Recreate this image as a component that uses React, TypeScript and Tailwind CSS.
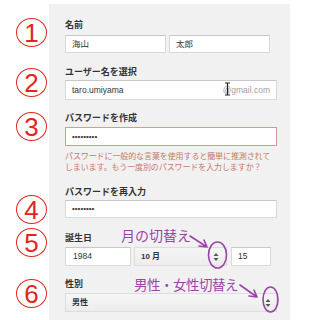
const jp = { fontFamily: '"Liberation Sans", "Noto Sans CJK JP", sans-serif' };

function Num({ ch, top }: { ch: string; top: string }) {
  return (
    <div className="w-[49px] shrink-0 bg-white pl-[16px]">
      <div
        className={`${top} w-[31px] h-[29px] rounded-[50%] border-[1.5px] border-[#e2261c] flex items-center justify-center text-[26px] leading-none text-[#e2261c]`}
        style={{ fontFamily: '"Liberation Sans", sans-serif' }}
      >
        {ch}
      </div>
    </div>
  );
}

function Arrows() {
  return (
    <svg width="6" height="10" viewBox="0 0 6 10" className="shrink-0">
      <path d="M3 1 L5.5 4 L0.5 4 Z" fill="#555" />
      <path d="M3 9 L5.5 6 L0.5 6 Z" fill="#555" />
    </svg>
  );
}

export default function App() {
  return (
    <div className="relative w-[297px] h-[320px] overflow-hidden bg-white text-[#333]" style={jp}>
      <div className="h-[4px]" />

      {/* 名前 */}
      <div className="flex">
        <Num ch="1" top="mt-[14px]" />
        <div className="w-[241px] bg-[#f1f1f1] pl-4 pt-[14px] pb-[9px]">
          <div className="text-[9px] font-bold leading-[14px] mb-[3px]">名前</div>
          <div className="flex gap-[3px]">
            <div className="w-[101px] h-[18px] bg-white border border-[#d9d9d9] border-t-[#c8c8c8] pl-[6px] text-[8.5px] leading-[16px]">海山</div>
            <div className="w-[101px] h-[18px] bg-white border border-[#d9d9d9] border-t-[#c8c8c8] pl-[6px] text-[8.5px] leading-[16px]">太郎</div>
          </div>
        </div>
        <div className="flex-1 bg-white" />
      </div>

      {/* ユーザー名 */}
      <div className="flex">
        <Num ch="2" top="mt-[6px]" />
        <div className="w-[241px] bg-[#f1f1f1] pl-4 pt-[3px] pb-[8px]">
          <div className="text-[9px] font-bold leading-[14px] mb-[1px]">ユーザー名を選択</div>
          <div className="relative w-[212px] h-[20px] bg-white border border-[#d9d9d9] border-t-[#c8c8c8] pl-[6px] pr-[6px] flex items-center justify-between text-[8.5px]">
            <span>taro.umiyama</span>
            <span className="text-[#a0a0a0]">@gmail.com</span>
            <svg width="7" height="14" viewBox="0 0 7 14" className="absolute left-[158px] top-[1px]">
              <path d="M1 1 H6 M3.5 1 V13 M1 13 H6" stroke="#222" strokeWidth="1.2" fill="none" />
            </svg>
          </div>
        </div>
        <div className="flex-1 bg-white" />
      </div>

      {/* パスワード */}
      <div className="flex">
        <Num ch="3" top="mt-[4px]" />
        <div className="w-[241px] bg-[#f1f1f1] pl-4 pt-[3px] pb-[7px]">
          <div className="text-[9px] font-bold leading-[14px] mb-[2px]">パスワードを作成</div>
          <div className="w-[212px] h-[19px] bg-white border border-[#d69b8e] pl-[6px] flex items-center text-[8px] leading-none">•••••••••</div>
          <div className="mt-[5px] text-[8px] leading-[11px] text-[#c7786a] tracking-[-0.1px]">
            パスワードに一般的な言葉を使用すると簡単に推測されて
            <br />
            しまいます。もう一度別のパスワードを入力しますか？
          </div>
        </div>
        <div className="flex-1 bg-white" />
      </div>

      {/* 再入力 */}
      <div className="flex">
        <Num ch="4" top="mt-[15px]" />
        <div className="w-[241px] bg-[#f1f1f1] pl-4 pt-[5px] pb-[10px]">
          <div className="text-[9px] font-bold leading-[14px] mb-[1px]">パスワードを再入力</div>
          <div className="w-[212px] h-[18px] bg-white border border-[#d9d9d9] border-t-[#c8c8c8] pl-[6px] flex items-center text-[8px] leading-none">••••••••</div>
        </div>
        <div className="flex-1 bg-white" />
      </div>

      {/* 誕生日 */}
      <div className="flex">
        <Num ch="5" top="mt-0" />
        <div className="w-[241px] bg-[#f1f1f1] pl-4 pt-[3px] pb-[8px]">
          <div className="text-[9px] font-bold leading-[14px] mb-[2px]">誕生日</div>
          <div className="flex gap-[3px]">
            <div className="w-[66px] h-[19px] bg-white border border-[#d9d9d9] border-t-[#c8c8c8] pl-[7px] text-[8.5px] leading-[17px]">1984</div>
            <div className="w-[93px] h-[19px] bg-gradient-to-b from-[#f6f6f6] to-[#ececec] border border-[#dcdcdc] pl-[6px] pr-[7px] flex items-center justify-between text-[8px] font-bold">
              <span>10 月</span>
              <Arrows />
            </div>
            <div className="ml-[1px] w-[40px] h-[19px] bg-white border border-[#d9d9d9] border-t-[#c8c8c8] pl-[6px] text-[8.5px] leading-[17px]">15</div>
          </div>
        </div>
        <div className="flex-1 bg-white" />
      </div>

      {/* 性別 */}
      <div className="flex">
        <Num ch="6" top="mt-[5px]" />
        <div className="w-[241px] bg-[#f1f1f1] pl-4 pt-[3px] pb-[8px]">
          <div className="text-[9px] font-bold leading-[14px] mb-[2px]">性別</div>
          <div className="w-[212px] h-[19px] bg-gradient-to-b from-[#f6f6f6] to-[#ececec] border border-[#dcdcdc] pl-[6px] pr-[5px] flex items-center justify-between text-[8px] font-bold">
            <span>男性</span>
            <Arrows />
          </div>
        </div>
        <div className="flex-1 bg-white" />
      </div>

      {/* annotations */}
      <span className="absolute left-[121px] top-[226px] text-[14px] leading-[18px] text-[#9b43a9]" style={{ fontFamily: '"Noto Sans CJK JP", sans-serif' }}>
        月の切替え
      </span>
      <span className="absolute left-[134px] top-[275px] text-[13.5px] leading-[18px] tracking-[-0.5px] text-[#9b43a9]" style={{ fontFamily: '"Noto Sans CJK JP", sans-serif' }}>
        男性・女性切替え
      </span>
      <svg className="absolute inset-0 pointer-events-none" width="297" height="320" viewBox="0 0 297 320">
        <g stroke="#9b43a9" strokeWidth="1.6" fill="none" strokeLinecap="round">
          <path d="M190 236 L207 247 M207 247 L199 246 M207 247 L204 240" />
          <ellipse cx="217.5" cy="255" rx="9" ry="13" />
          <path d="M240 285 L257 297 M257 297 L249 296 M257 297 L254 290" />
          <ellipse cx="270.5" cy="299.5" rx="7.5" ry="12.5" />
        </g>
      </svg>
    </div>
  );
}
